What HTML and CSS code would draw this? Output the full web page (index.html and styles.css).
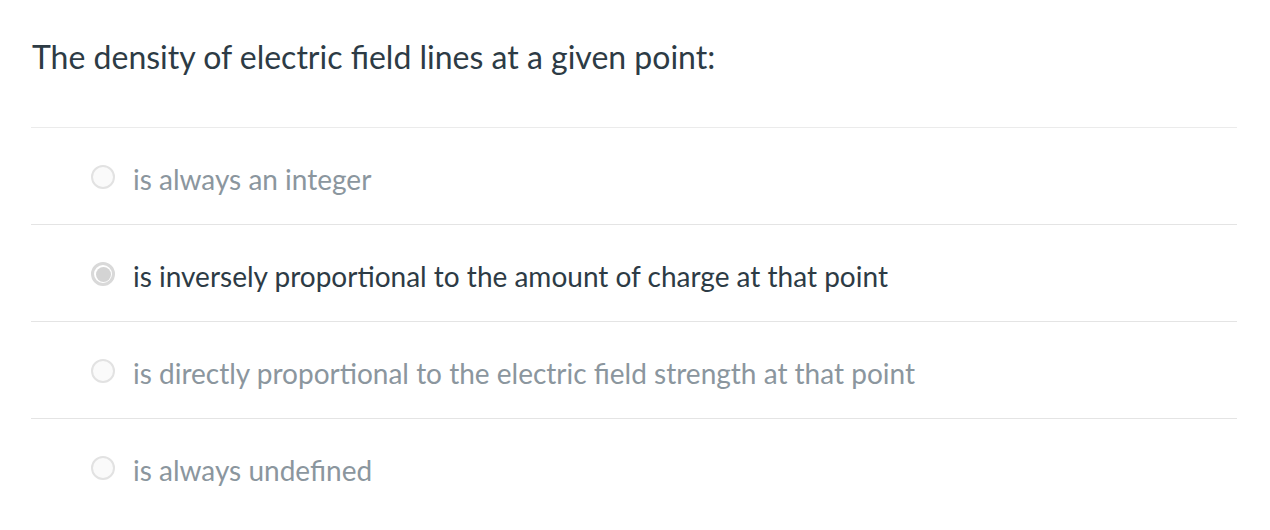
FILE: index.html
```html
<!DOCTYPE html>
<html>
<head>
<meta charset="utf-8">
<link rel="stylesheet" href="styles.css">
</head>
<body>
<div class="question">
  <div class="question-text">The density of electric field lines at a given point:</div>
  <div class="answers">
    <div class="answer">
      <span class="radio"></span>
      <span class="label muted">is always an integer</span>
    </div>
    <div class="answer">
      <span class="radio checked"></span>
      <span class="label">is inversely proportional to the amount of charge at that point</span>
    </div>
    <div class="answer">
      <span class="radio"></span>
      <span class="label muted">is directly proportional to the electric field strength at that point</span>
    </div>
    <div class="answer">
      <span class="radio"></span>
      <span class="label muted">is always undefined</span>
    </div>
  </div>
</div>
</body>
</html>
```

FILE: styles.css
```css
html, body {
  margin: 0;
  padding: 0;
  background: #ffffff;
}
body {
  font-family: Lato, "Open Sans", sans-serif;
  color: #2d3b45;
}
.question {
  padding: 34px 33px 0 31px;
}
.question-text {
  font-size: 32px;
  line-height: 46px;
  padding-left: 1px;
  margin-bottom: 47px;
}
.answers {
  display: flex;
  flex-direction: column;
}
.answer {
  display: flex;
  align-items: center;
  gap: 18px;
  height: 97px;
  border-top: 1.5px solid #e4e4e4;
  padding-left: 60px;
  box-sizing: border-box;
}
.answer:first-child {
  border-top-color: #ebebeb;
}
.radio {
  width: 24px;
  height: 24px;
  margin-top: 2px;
  border-radius: 50%;
  border: 2px solid #e2e2e2;
  box-sizing: border-box;
  background: #fafafa;
  flex: none;
  position: relative;
}
.radio.checked {
  border: 3px solid #d9d9d9;
  background: #fff;
}
.radio.checked::after {
  content: "";
  position: absolute;
  inset: 1.5px;
  border-radius: 50%;
  background: #d4d4d4;
}
.label {
  font-size: 28px;
  line-height: 36px;
  padding-top: 6px;
}
.muted {
  color: #8b969e;
}
```
